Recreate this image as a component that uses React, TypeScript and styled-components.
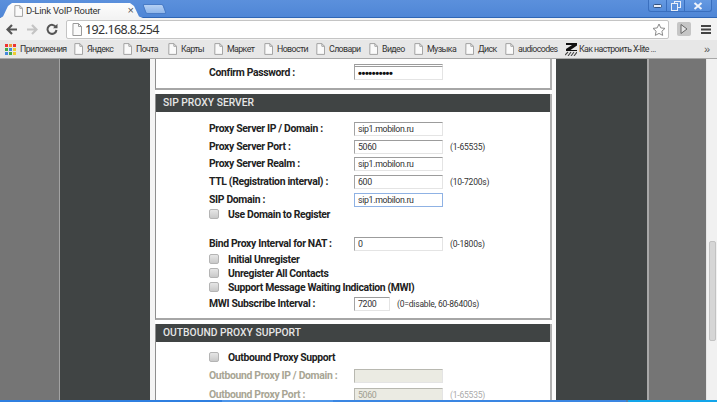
import React from "react";
import styled, { createGlobalStyle } from "styled-components";

const Global = createGlobalStyle`
  html, body { margin: 0; padding: 0; background: #fff; overflow: hidden; }
  * { box-sizing: border-box; }
  #root { width: 717px; height: 402px; }
`;

const Shell = styled.div`
  width: 717px; height: 402px; display: flex; flex-direction: column; overflow: hidden;
  font-family: Roboto, "Liberation Sans", sans-serif; color: #222;
`;

const TitleBar = styled.div`
  height: 18px; flex: none; display: flex; align-items: flex-end; justify-content: space-between;
  background: linear-gradient(#5b90dc, #4f86d6); border-bottom: 1px solid #2f66b5;
`;
const TabStrip = styled.div`display: flex; align-items: flex-end;`;
const Tab = styled.div`
  width: 143px; height: 15px; margin-bottom: -1px; display: flex; align-items: center; padding: 0 9px 0 14px; gap: 3px;
  background: linear-gradient(#fdfdfd, #f3f3f3);
  clip-path: polygon(0 100%, 3px 90%, 8px 20%, 12px 0, 130px 0, 134px 20%, 139px 90%, 143px 100%);
`;
const TabTitle = styled.span`
  flex: 1; font-size: 9.5px; letter-spacing: -.25px; color: #333; white-space: nowrap;
`;
const TabClose = styled.span`font-size: 11px; color: #555; line-height: 1; font-family: "Liberation Sans", sans-serif;`;
const NewTab = styled.div`
  width: 21px; height: 10px; margin: 0 0 3px 1px;
  background: linear-gradient(#b6d0f3, #8fb6ea); border: 1px solid #4a7cc6; border-radius: 2px;
  transform: skewX(20deg);
`;
const WindowButtons = styled.div`
  display: flex; align-self: flex-start; height: 12px; margin-right: 5px;
  background: linear-gradient(#659ae2, #558cda); border: 1px solid #3a6fbe; border-top: 0; border-radius: 0 0 3px 3px;
`;
const WindowButton = styled.div<{ $w: number }>`
  width: ${(p) => p.$w}px; display: flex; align-items: center; justify-content: center;
  border-left: 1px solid #3a6fbe; &:first-child { border-left: 0; }
`;

const Toolbar = styled.div`
  height: 22px; flex: none; display: flex; align-items: center; background: #f3f3f3; padding-left: 6px;
`;
const NavIcon = styled.div<{ $w: number; $ml?: number }>`
  width: ${(p) => p.$w}px; margin-left: ${(p) => p.$ml ?? 0}px; flex: none; display: flex; align-items: center;
`;
const Omnibox = styled.div`
  width: 603px; height: 19px; flex: none; margin-left: 6px; background: #fff; border: 1px solid #c4c4c4; border-radius: 2px;
  display: flex; align-items: center; padding: 0 2px 0 5px;
`;
const Url = styled.span`
  flex: 1; margin-left: 3px; font-size: 12.5px; letter-spacing: -.6px; color: #333; font-family: "Noto Sans", sans-serif;
`;

const BookmarksBar = styled.div`
  height: 19px; flex: none; display: flex; align-items: center; background: #e7e7e7; padding-left: 5px;
  border-bottom: 1px solid #a8a8a8;
`;
const Bookmark = styled.div<{ $w: number; $gap?: number }>`
  width: ${(p) => p.$w}px; flex: none; display: flex; align-items: center; gap: ${(p) => p.$gap ?? 4}px;
  font-size: 8.8px; letter-spacing: -.6px; color: #333; white-space: nowrap;
`;
const More = styled.span`
  margin-left: auto; margin-right: 7px; font-size: 11px; color: #555; font-family: "Liberation Sans", sans-serif;
`;

const Viewport = styled.div`flex: 1; min-height: 0; display: flex; overflow: hidden; background: #fff;`;
const Gutter = styled.div<{ $w: number }>`
  width: ${(p) => p.$w}px; flex: none; background: #757575;
`;
const Column = styled.div<{ $w: number }>`
  width: ${(p) => p.$w}px; flex: none; background: #404444;
`;
const Hairline = styled.div<{ $w: number; $c: string }>`
  width: ${(p) => p.$w}px; flex: none; background: ${(p) => p.$c};
`;
const Content = styled.div`width: 397px; flex: none; background: #fff; display: flex; flex-direction: column; gap: 4px;`;
const Section = styled.section`
  flex: none; border-left: 1px solid #8e8e8e; border-right: 2px solid #b0b0b0; border-bottom: 2px solid #a6a6a6;
`;
const SectionHead = styled.h2`
  margin: 0; height: 18px; background: #404444; color: #e6e6e6; padding-left: 7px;
  font-size: 10.3px; line-height: 18px; font-weight: 500; white-space: nowrap;
`;
const Body = styled.div<{ $pt: number; $pb: number }>`
  padding: ${(p) => p.$pt}px 0 ${(p) => p.$pb}px 53px;
`;
const Row = styled.div<{ $h: number }>`
  height: ${(p) => p.$h}px; display: flex; align-items: flex-start; white-space: nowrap;
`;
const CutRow = styled.div`height: 7px; overflow: hidden; padding-left: 145px;`;
const Label = styled.label<{ $off?: boolean }>`
  width: 145px; flex: none; height: 14px; line-height: 14px; font-size: 10.4px; font-weight: 700; letter-spacing: -.33px;
  color: ${(p) => (p.$off ? "#a8a594" : "#222")};
`;
const Field = styled.input<{ $w?: number; $focus?: boolean }>`
  width: ${(p) => p.$w ?? 89}px; height: 14px; flex: none; margin: 0; padding: 0 0 0 3px; outline: 0;
  font: 8.8px Roboto, sans-serif; letter-spacing: -.35px; color: #333; background: #fff;
  border: 1px solid ${(p) => (p.$focus ? "#8fb2e4" : "#e4e4e4")};
  border-top-color: ${(p) => (p.$focus ? "#8fb2e4" : "#9c9c9c")};
  border-left-color: ${(p) => (p.$focus ? "#8fb2e4" : "#a4a4a4")};
  &:disabled { background: #ebebe3; color: #a09e90; border-top-color: #b8b8b0; border-left-color: #b8b8b0; }
`;
const CutField = styled(Field)`margin-top: -9px;`;
const SecretField = styled(Field)`
  font: bold 11px "Liberation Sans", sans-serif; letter-spacing: -.4px; color: #111;
`;
const Note = styled.span<{ $off?: boolean }>`
  margin-left: 7px; line-height: 14px; font-size: 8.5px; letter-spacing: -.2px; color: ${(p) => (p.$off ? "#aaa" : "#333")};
`;
const Tick = styled.input`
  appearance: none; width: 10px; height: 10px; margin: 1px 9px 0 0; flex: none; border-radius: 2px;
  background: linear-gradient(#e6e6e6, #c9c9c9); border: 1px solid #b4b4b4;
`;
const TickLabel = styled.label`
  line-height: 14px; height: 14px; font-size: 10.4px; font-weight: 700; letter-spacing: -.35px; color: #222;
`;

const Scrollbar = styled.div`
  flex: 1; background: #f1f1f1; border-left: 1px solid #e6e6e6; padding: 182px 1px 0 2px;
`;
const Thumb = styled.div`
  height: 100px; background: #d6d6d6; border: 1px solid #c2c2c2; border-radius: 2px;
`;

const TaskBar = styled.div`height: 2px; flex: none; display: flex;`;
const TaskPart = styled.div<{ $w?: number; $c: string }>`
  ${(p) => (p.$w ? `width: ${p.$w}px; flex: none;` : "flex: 1;")} background: ${(p) => p.$c};
`;

const Page = ({ s = 11 }: { s?: number }) => (
  <svg width={s - 2} height={s + 1} viewBox="0 0 10 13" style={{ flex: "none" }}>
    <path d="M1 .5h5.5L9.5 3.5v9H.9z" fill="#fafafa" stroke="#9a9a9a" />
    <path d="M6.5.5v3h3" fill="none" stroke="#9a9a9a" />
  </svg>
);

const Apps = () => {
  const c = ["#e33", "#e93", "#e33", "#4a4", "#48d", "#ec3", "#48d", "#4a4", "#ec3"];
  return (
    <svg width="11" height="11" viewBox="0 0 11 11" style={{ flex: "none" }}>
      {c.map((f, i) => (
        <rect key={i} x={(i % 3) * 4} y={Math.floor(i / 3) * 4} width="3" height="3" fill={f} />
      ))}
    </svg>
  );
};

const ZLogo = () => (
  <svg width="12" height="13" viewBox="0 0 12 13" style={{ flex: "none" }}>
    <path d="M1 0h11v2.5L5.5 7H12v1H1V6l6-4H1z" fill="#111" />
    <path d="M0 12l3-3M3 13l3-4M6 13l3-4M9 13l3-4" stroke="#444" strokeWidth="1.1" fill="none" />
  </svg>
);

const marks: [string, number][] = [
  ["Яндекс", 49], ["Почта", 45], ["Карты", 46], ["Маркет", 50], ["Новости", 52],
  ["Словари", 53], ["Видео", 45], ["Музыка", 51], ["Диск", 40],
];

export default function App() {
  return (
    <Shell>
      <Global />
      <TitleBar>
        <TabStrip>
          <Tab>
            <Page />
            <TabTitle>D-Link VoIP Router</TabTitle>
            <TabClose>×</TabClose>
          </Tab>
          <NewTab />
        </TabStrip>
        <WindowButtons>
          <WindowButton $w={17}>
            <svg width="9" height="4" viewBox="0 0 9 4"><rect x=".5" y=".5" width="8" height="3" rx="1" fill="#e8eef8" stroke="#33527f" /></svg>
          </WindowButton>
          <WindowButton $w={18}>
            <svg width="10" height="10" viewBox="0 0 10 10"><rect x="3.5" y=".5" width="6" height="6" fill="none" stroke="#e8eef8" /><rect x=".5" y="2.5" width="6" height="7" fill="#5b90dc" stroke="#e8eef8" /></svg>
          </WindowButton>
          <WindowButton $w={27}>
            <svg width="10" height="8" viewBox="0 0 10 8"><path d="M1.5 1l7 6M8.5 1l-7 6" stroke="#eef3fb" strokeWidth="2" /></svg>
          </WindowButton>
        </WindowButtons>
      </TitleBar>

      <Toolbar>
        <NavIcon $w={20}>
          <svg width="12" height="11" viewBox="0 0 12 11"><path d="M11 5.5H2.5M6 1L1.5 5.5 6 10" fill="none" stroke="#555" strokeWidth="2.2" /></svg>
        </NavIcon>
        <NavIcon $w={20}>
          <svg width="12" height="11" viewBox="0 0 12 11"><path d="M1 5.5h8.5M6 1l4.5 4.5L6 10" fill="none" stroke="#c4c4c4" strokeWidth="2.2" /></svg>
        </NavIcon>
        <NavIcon $w={14}>
          <svg width="12" height="12" viewBox="0 0 12 12"><path d="M10 4.2A4.5 4.5 0 1 0 10.5 7" fill="none" stroke="#555" strokeWidth="2" /><path d="M11.5.8v4.5H7z" fill="#555" /></svg>
        </NavIcon>
        <Omnibox>
          <Page s={12} />
          <Url>192.168.8.254</Url>
          <svg width="14" height="13" viewBox="0 0 14 13"><path d="M7 1l1.8 3.9 4.2.5-3.1 2.8.8 4.2L7 10.4 3.3 12.4l.8-4.2L1 5.4l4.2-.5z" fill="#fff" stroke="#8a8a8a" /></svg>
        </Omnibox>
        <NavIcon $w={16} $ml={8}>
          <svg width="14" height="14" viewBox="0 0 14 14"><rect width="14" height="14" rx="2" fill="#c6c6c6" /><path d="M4 2.5v9l6-4.5z" fill="#e4e4e4" stroke="#666" /></svg>
        </NavIcon>
        <NavIcon $w={10} $ml={8}>
          <svg width="10" height="9" viewBox="0 0 10 9"><path d="M0 1h10M0 4.5h10M0 8h10" stroke="#444" strokeWidth="2" /></svg>
        </NavIcon>
      </Toolbar>

      <BookmarksBar>
        <Bookmark $w={69}><Apps />Приложения</Bookmark>
        {marks.map(([t, w]) => (
          <Bookmark key={t} $w={w}><Page />{t}</Bookmark>
        ))}
        <Bookmark $w={60}><Page />audiocodes</Bookmark>
        <Bookmark $w={100} $gap={2}><ZLogo />Как настроить X-lite ...</Bookmark>
        <More>»</More>
      </BookmarksBar>

      <Viewport>
        <Gutter $w={59} />
        <Hairline $w={1} $c="#a2a2a2" />
        <Column $w={90} />
        <Hairline $w={5} $c="#f4f4f4" />
        <Content>
          <Section>
            <Body $pt={0} $pb={8}>
              <CutRow><CutField readOnly value="" /></CutRow>
              <Row $h={14}>
                <Label>Confirm Password :</Label>
                <SecretField type="password" readOnly value="••••••••••" />
              </Row>
            </Body>
          </Section>
          <Section>
            <SectionHead>SIP PROXY SERVER</SectionHead>
            <Body $pt={10} $pb={7}>
              <Row $h={18}><Label>Proxy Server IP / Domain :</Label><Field readOnly value="sip1.mobilon.ru" /></Row>
              <Row $h={17}><Label>Proxy Server Port :</Label><Field readOnly value="5060" /><Note>(1-65535)</Note></Row>
              <Row $h={18}><Label>Proxy Server Realm :</Label><Field readOnly value="sip1.mobilon.ru" /></Row>
              <Row $h={18}><Label>TTL (Registration interval) :</Label><Field readOnly value="600" /><Note>(10-7200s)</Note></Row>
              <Row $h={15}><Label>SIP Domain :</Label><Field $focus readOnly value="sip1.mobilon.ru" /></Row>
              <Row $h={29}><Tick type="checkbox" readOnly /><TickLabel>Use Domain to Register</TickLabel></Row>
              <Row $h={16}><Label>Bind Proxy Interval for NAT :</Label><Field readOnly value="0" /><Note>(0-1800s)</Note></Row>
              <Row $h={14}><Tick type="checkbox" readOnly /><TickLabel>Initial Unregister</TickLabel></Row>
              <Row $h={14}><Tick type="checkbox" readOnly /><TickLabel>Unregister All Contacts</TickLabel></Row>
              <Row $h={16}><Tick type="checkbox" readOnly /><TickLabel>Support Message Waiting Indication (MWI)</TickLabel></Row>
              <Row $h={14}><Label>MWI Subscribe Interval :</Label><Field $w={36} readOnly value="7200" /><Note>(0=disable, 60-86400s)</Note></Row>
            </Body>
          </Section>
          <Section>
            <SectionHead>OUTBOUND PROXY SUPPORT</SectionHead>
            <Body $pt={9} $pb={8}>
              <Row $h={18}><Tick type="checkbox" readOnly /><TickLabel>Outbound Proxy Support</TickLabel></Row>
              <Row $h={19}><Label $off>Outbound Proxy IP / Domain :</Label><Field disabled value="" /></Row>
              <Row $h={14}><Label $off>Outbound Proxy Port :</Label><Field disabled value="5060" /><Note $off>(1-65535)</Note></Row>
            </Body>
          </Section>
        </Content>
        <Hairline $w={4} $c="#fbfbfb" />
        <Column $w={91} />
        <Hairline $w={2} $c="#a8a8a8" />
        <Gutter $w={57} />
        <Scrollbar><Thumb /></Scrollbar>
      </Viewport>

      <TaskBar>
        <TaskPart $w={222} $c="#2f7fe0" />
        <TaskPart $w={111} $c="#4c95ea" />
        <TaskPart $w={293} $c="#3a86e2" />
        <TaskPart $w={2} $c="#5a7fa8" />
        <TaskPart $c="#12a5ea" />
      </TaskBar>
    </Shell>
  );
}
